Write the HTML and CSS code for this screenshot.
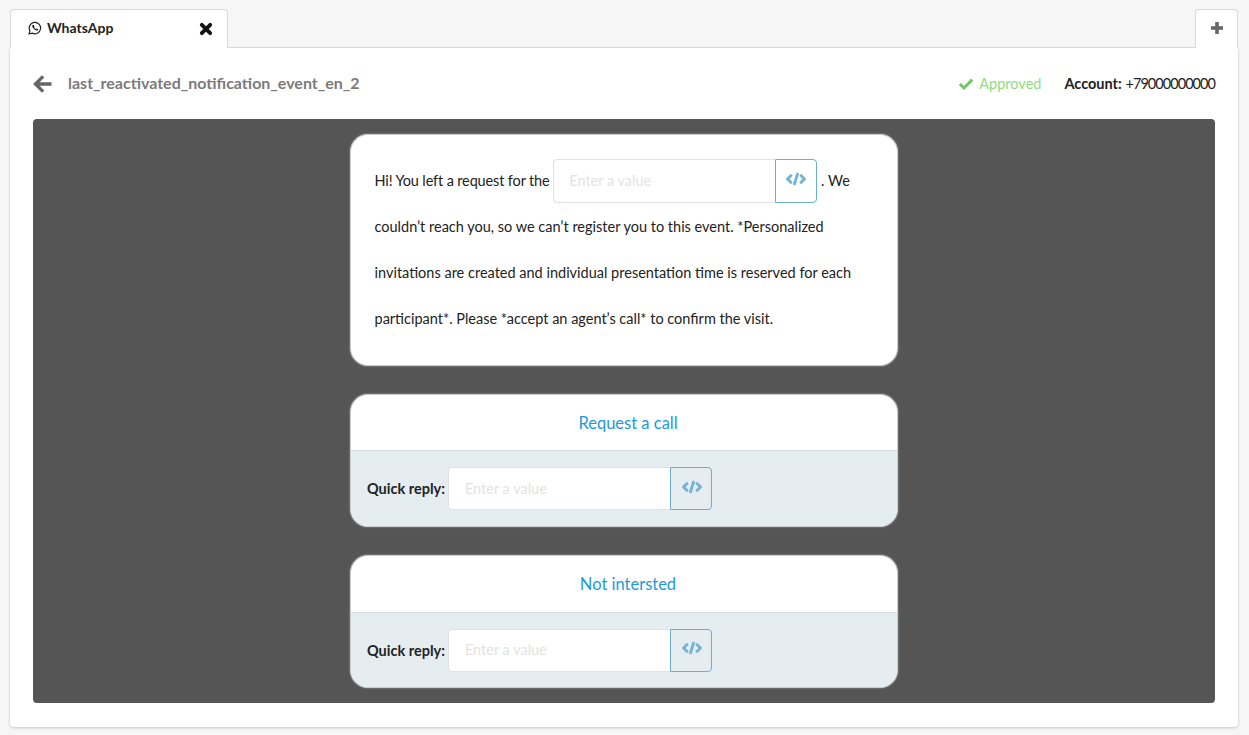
FILE: index.html
```html
<!DOCTYPE html>
<html>
<head>
    <title>WhatsApp template</title>
    <link rel="stylesheet" href="styles.css">
</head>
<body>
    <div class="tabs">
        <div class="tab tab-main">
            <svg class="wa-icon" viewBox="0 0 14 14" width="14" height="14">
                <path d="M1 13 L1.9 9.8 A5.7 5.7 0 1 1 4.2 12.1 Z" fill="none" stroke="#222" stroke-width="1.2" stroke-linejoin="round"/>
                <path d="M4.6 3.9 C4.1 4.4 4 5.4 4.9 6.8 C5.9 8.4 7.6 9.6 9 9.6 C9.8 9.6 10.3 9 10.3 8.4 L8.8 7.6 L8.1 8.2 C7.2 7.8 6.4 7 6 6.1 L6.5 5.4 L5.8 3.9 Z" fill="#222"/>
            </svg>
            <span class="tab-title">WhatsApp</span>
            <svg class="close-icon" viewBox="0 0 14 14" width="14" height="14">
                <path d="M2.8 2.8 L11.2 11.2 M11.2 2.8 L2.8 11.2" stroke="#111" stroke-width="3.8" stroke-linecap="round"/>
            </svg>
        </div>
        <div class="tab-spacer"></div>
        <div class="tab tab-add">
            <svg viewBox="0 0 14 14" width="14" height="14">
                <path d="M7 1 V13 M1 7 H13" stroke="#666" stroke-width="3.6"/>
            </svg>
        </div>
    </div>

    <div class="panel">
        <div class="panel-header">
            <svg class="back-icon" viewBox="0 0 20 20" width="20" height="20">
                <path d="M18.5 10 H3 M10.1 2.4 L2.5 10 L10.1 17.6" fill="none" stroke="#666" stroke-width="3.4"/>
            </svg>
            <span class="template-name">last_reactivated_notification_event_en_2</span>
            <span class="status">
                <svg viewBox="0 0 16 14" width="16" height="14">
                    <path d="M1.8 7 L6 11 L14.2 2.6" fill="none" stroke="#6ccb5f" stroke-width="3"/>
                </svg>
                Approved
            </span>
            <span class="account"><b>Account:</b> <span class="phone">+79000000000</span></span>
        </div>

        <div class="preview">
            <div class="card card-body">
                <span class="intro">Hi! You left a request for the</span>
                <span class="value-input">
                    <span class="value-text">Enter a value</span>
                    <span class="value-btn">
                        <svg viewBox="0 0 20 14" width="20" height="14"><path d="M5.8 2.8 L1.6 7 L5.8 11.2 M14.2 2.8 L18.4 7 L14.2 11.2 M11.8 1 L8.2 13" fill="none" stroke="#74b2d6" stroke-width="2.8"/></svg>
                    </span>
                </span>
                . We<br>
                couldn’t reach you, so we can’t register you to this event. *Personalized<br>
                invitations are created and individual presentation time is reserved for each<br>
                participant*. Please *accept an agent’s call* to confirm the visit.
            </div>

            <div class="card">
                <div class="button-title">Request a call</div>
                <div class="button-reply">
                    <b>Quick reply:</b>
                    <span class="value-input">
                        <span class="value-text">Enter a value</span>
                        <span class="value-btn">
                            <svg viewBox="0 0 20 14" width="20" height="14"><path d="M5.8 2.8 L1.6 7 L5.8 11.2 M14.2 2.8 L18.4 7 L14.2 11.2 M11.8 1 L8.2 13" fill="none" stroke="#74b2d6" stroke-width="2.8"/></svg>
                        </span>
                    </span>
                </div>
            </div>

            <div class="card card-last">
                <div class="button-title">Not intersted</div>
                <div class="button-reply">
                    <b>Quick reply:</b>
                    <span class="value-input">
                        <span class="value-text">Enter a value</span>
                        <span class="value-btn">
                            <svg viewBox="0 0 20 14" width="20" height="14"><path d="M5.8 2.8 L1.6 7 L5.8 11.2 M14.2 2.8 L18.4 7 L14.2 11.2 M11.8 1 L8.2 13" fill="none" stroke="#74b2d6" stroke-width="2.8"/></svg>
                        </span>
                    </span>
                </div>
            </div>
        </div>
    </div>
</body>
</html>
```

FILE: styles.css
```css
body {
    font-family: "Lato", "Noto Sans", sans-serif;
    font-size: 14.5px;
    color: #222;
    margin: 0;
    padding: 9px 11px 8px 10px;
    background: #f6f6f6;
}
svg {
    display: block;
}

/* tabs */
.tabs {
    display: flex;
    height: 39px;
}
.tab {
    background: white;
    border: 1px solid #d8d8d8;
    border-bottom: none;
    border-radius: 4px 4px 0 0;
}
.tab-main {
    width: 218px;
    box-sizing: border-box;
    display: flex;
    align-items: center;
    padding: 0 14px 0 17px;
}
.wa-icon {
    margin: -3px 5px 0 0;
}
.tab-title {
    font-size: 14px;
    font-weight: 700;
    flex: 1;
    margin-top: -4px;
}
.tab-spacer {
    flex: 1;
    border-bottom: 1px solid #d8d8d8;
}
.tab-add {
    width: 43px;
    box-sizing: border-box;
    display: flex;
    justify-content: center;
    align-items: center;
    padding-bottom: 3px;
}

/* main panel */
.panel {
    background: white;
    border-radius: 0 0 4px 4px;
    box-shadow: 0 1px 3px rgba(0, 0, 0, 0.2);
    padding: 0 23px 24px;
    height: 679px;
    box-sizing: border-box;
}
.panel-header {
    display: flex;
    align-items: center;
    height: 71px;
}
.back-icon {
    margin-right: 15px;
}
.template-name {
    flex: 1;
    font-size: 16px;
    font-weight: 700;
    color: #7b7b7b;
    margin-top: -2px;
}
.status {
    display: flex;
    align-items: center;
    gap: 5px;
    color: #8fdc80;
    margin-right: 23px;
}
.phone {
    letter-spacing: -0.95px;
}
.preview {
    background: #555;
    border-radius: 4px;
    height: 584px;
    box-sizing: border-box;
    padding-top: 15px;
    display: flex;
    flex-direction: column;
    align-items: center;
}

/* cards */
.card {
    width: 548px;
    flex-shrink: 0;
    box-sizing: border-box;
    background: white;
    border: 1px solid #ccc;
    border-radius: 18px;
    box-shadow: 0 0 2px rgba(255, 255, 255, 0.5);
    overflow: hidden;
    margin-bottom: 28px;
}
.card-body {
    height: 232px;
    padding: 23px 24px 23px 23.5px;
    line-height: 46px;
}
.card-body .value-input {
    vertical-align: baseline;
    margin: -4px 0;
}
.intro {
    letter-spacing: -0.14px;
}
.button-title {
    height: 55px;
    line-height: 57px;
    padding-left: 8px;
    text-align: center;
    font-size: 16.5px;
    color: #1a9ae0;
}
.button-reply {
    height: 76px;
    box-sizing: border-box;
    background: #e6edf0;
    border-top: 1px solid #d3dadd;
    display: flex;
    align-items: center;
    gap: 3px;
    padding: 0 16px;
}
.card-last .button-title {
    height: 56px;
}
.card-last .button-reply {
    height: 75px;
}

/* value input */
.value-input {
    display: inline-flex;
    vertical-align: middle;
    width: 264px;
    height: 44px;
    line-height: 1;
}
.button-reply .value-input {
    height: 43px;
}
.value-text {
    flex: 1;
    display: flex;
    align-items: center;
    padding-left: 15px;
    background: white;
    border: 1px solid #e2e2e2;
    border-right: none;
    border-radius: 4px 0 0 4px;
    color: #e3e3e3;
}
.button-reply .value-text {
    padding: 1px 0 0 16px;
}
.value-btn {
    width: 42px;
    box-sizing: border-box;
    display: flex;
    justify-content: center;
    align-items: center;
    padding-bottom: 4px;
    border: 1px solid #6aaed0;
    border-radius: 0 4px 4px 0;
}
.button-reply .value-btn {
    padding-left: 2px;
}
```
